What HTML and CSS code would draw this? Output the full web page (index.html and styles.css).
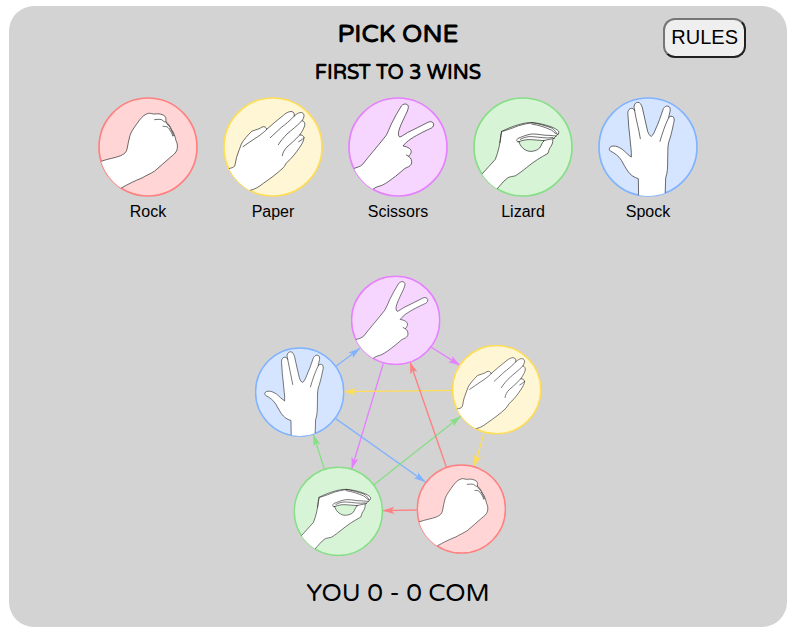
FILE: index.html
```html
<!DOCTYPE html>
<html lang="en">
<head>
<meta charset="utf-8">
<title>Rock Paper Scissors Lizard Spock</title>
<link rel="stylesheet" href="styles.css">
</head>
<body>
<svg class="sprite" aria-hidden="true">
  <defs>
    <clipPath id="disc"><circle cx="174" cy="171" r="147"/></clipPath>
    <symbol id="rock" viewBox="24 21 300 300">
      <circle cx="174" cy="171" r="147" fill="#ffd5d5" stroke="#ff8080" stroke-width="5"/>
      <g clip-path="url(#disc)" class="hand">
        <path d="M20 219L33 214C55 206 75 204 92 197C103 192 108 188 111 178C114 163 116 150 120 136C125 121 137 107 148 91C157 79 166 72 176 70C184 69 187 73 195 72C207 70 219 73 225 79C229 83 227 89 228 95C235 102 241 108 244 118C252 128 255 139 258 152C263 161 263 170 261 179C258 189 250 195 241 202C224 217 209 230 194 243C180 252 167 257 156 264C134 272 112 284 92 295L60 330L10 270Z"/>
        <path d="M194 89C205 88 215 86 220 93C224 97 228 96 228 95M219 109C227 109 234 109 238 118C243 125 247 131 248 138M229 98C232 104 235 107 239 110M240 114C245 121 249 129 251 137" fill="none"/>
      </g>
    </symbol>
    <symbol id="paper" viewBox="24 21 300 300">
      <circle cx="174" cy="171" r="147" fill="#fff6d5" stroke="#ffdd55" stroke-width="5"/>
      <g clip-path="url(#disc)" class="hand">
        <path d="M20 243L42 236C49 233 55 234 59 228C63 216 63 204 67 195C72 184 74 173 79 162C86 149 99 135 110 124C121 119 133 118 141 111C149 108 154 112 155 118C171 104 188 89 205 76C215 67 227 62 234 66C238 69 239 74 237 79C246 70 256 65 263 69C269 73 268 82 261 92C267 93 271 99 269 107C266 117 261 125 254 135C260 134 266 137 267 143C267 152 260 163 254 172C242 190 228 207 215 218C211 222 210 228 205 233C186 251 164 267 145 280C131 291 120 298 105 301L75 330L10 270Z"/>
        <path d="M84 170C96 162 107 154 119 146C129 140 140 132 148 125C152 122 154 120 155 118M237 79C224 93 211 103 198 113C186 125 174 135 166 143M261 92C247 107 231 119 216 132C206 143 197 152 190 164M254 135C242 149 228 160 216 171C208 179 203 188 202 197M267 143L261 149L251 155" fill="none"/>
      </g>
    </symbol>
    <symbol id="scissors" viewBox="24 21 300 300">
      <circle cx="174" cy="171" r="147" fill="#f6d5ff" stroke="#e580ff" stroke-width="5"/>
      <g clip-path="url(#disc)" class="hand">
        <path d="M20 242L40 236C50 232 60 231 68 223C78 211 87 198 97 187C110 171 125 154 138 137C144 127 148 115 154 102C163 84 173 65 184 48C189 42 197 40 202 44C207 48 205 55 202 63C194 82 184 99 178 117C175 126 173 137 179 141C184 141 193 133 202 128C223 118 244 107 264 97C271 93 279 95 281 102C282 110 276 114 268 117C242 129 215 143 199 157C195 161 192 165 189 168C196 169 207 172 212 179C216 186 212 192 206 199C213 203 217 213 214 222C210 230 203 231 195 235C184 244 171 256 157 266C142 277 129 286 120 288C111 290 105 293 97 299L73 330L10 270Z"/>
        <path d="M206 199L199 195" fill="none"/>
      </g>
    </symbol>
    <symbol id="lizard" viewBox="24 21 300 300">
      <circle cx="174" cy="171" r="147" fill="#d7f4d7" stroke="#87de87" stroke-width="5"/>
      <g clip-path="url(#disc)" class="hand">
        <path d="M20 280L52 251C65 236 79 222 91 208C96 197 99 184 102 172C106 155 106 138 110 124C127 116 143 109 161 104C175 100 188 97 202 98C222 99 243 105 260 111C269 114 276 119 281 124C283 131 279 134 273 138L263 149C264 156 262 162 258 169C253 174 252 181 249 190C238 197 227 202 217 209C196 222 174 243 152 257C143 260 137 259 129 263C117 271 107 285 96 297L62 330Z"/>
        <path d="M162 155C173 150 187 148 200 149C213 150 225 151 238 152C230 158 230 166 224 174C216 182 203 185 193 184C177 181 165 169 162 155Z" class="gap"/>
        <path d="M162 155C153 158 154 149 159 145C172 140 185 134 200 132C218 131 236 137 252 136C260 136 267 138 273 138M166 148C179 141 190 139 202 140C222 141 241 146 264 143M202 98C220 101 240 107 258 113C266 117 271 123 275 130M200 102C221 105 243 113 259 120C267 124 267 131 278 133M235 152L268 145M113 124C130 119 146 113 161 107C175 103 188 100 202 98M110 124L105 158" fill="none"/>
      </g>
    </symbol>
    <symbol id="spock" viewBox="24 21 300 300">
      <circle cx="174" cy="171" r="147" fill="#d5e5ff" stroke="#80b3ff" stroke-width="5"/>
      <g clip-path="url(#disc)" class="hand">
        <path d="M146 330L145 266C132 262 121 255 113 243C106 234 101 222 95 212C86 198 74 189 61 183C56 179 57 171 65 169C76 166 86 171 97 178C107 186 114 195 124 201C125 183 121 163 120 145C117 122 115 99 114 77C112 64 116 55 125 55C130 55 132 58 134 62C130 49 133 38 143 37C151 37 154 44 157 53C162 76 167 99 173 124C176 132 179 138 184 139C191 134 193 126 197 117C206 98 212 79 219 59C223 49 230 46 237 50C242 54 241 61 239 69C237 74 237 79 236 83C239 78 247 77 251 82C254 88 252 96 250 104C246 123 242 141 236 157C232 175 234 193 233 210C233 230 233 247 227 264L225 330Z"/>
        <path d="M134 62C138 90 147 118 151 146M236 83C225 106 217 129 210 154" fill="none"/>
      </g>
    </symbol>
    <marker id="tip-blue" viewBox="-36 -12 36 24" refX="0" refY="0" markerWidth="36" markerHeight="24" markerUnits="userSpaceOnUse" orient="auto"><path d="M0 0L-35 -11L-27 0L-35 11Z" fill="#80b3ff"/></marker>
    <marker id="tip-purple" viewBox="-36 -12 36 24" refX="0" refY="0" markerWidth="36" markerHeight="24" markerUnits="userSpaceOnUse" orient="auto"><path d="M0 0L-35 -11L-27 0L-35 11Z" fill="#e580ff"/></marker>
    <marker id="tip-yellow" viewBox="-36 -12 36 24" refX="0" refY="0" markerWidth="36" markerHeight="24" markerUnits="userSpaceOnUse" orient="auto"><path d="M0 0L-35 -11L-27 0L-35 11Z" fill="#ffdd55"/></marker>
    <marker id="tip-green" viewBox="-36 -12 36 24" refX="0" refY="0" markerWidth="36" markerHeight="24" markerUnits="userSpaceOnUse" orient="auto"><path d="M0 0L-35 -11L-27 0L-35 11Z" fill="#87de87"/></marker>
    <marker id="tip-red" viewBox="-36 -12 36 24" refX="0" refY="0" markerWidth="36" markerHeight="24" markerUnits="userSpaceOnUse" orient="auto"><path d="M0 0L-35 -11L-27 0L-35 11Z" fill="#ff8080"/></marker>
  </defs>
</svg>
<main class="game">
  <header class="top">
    <div class="titles">
      <h1 class="title">PICK ONE</h1>
      <h2 class="subtitle">FIRST TO 3 WINS</h2>
    </div>
    <button class="rules" type="button">RULES</button>
  </header>
  <div class="choices">
    <button class="choice" type="button"><svg class="choice-icon" aria-hidden="true"><use href="#rock"/></svg>Rock</button>
    <button class="choice" type="button"><svg class="choice-icon" aria-hidden="true"><use href="#paper"/></svg>Paper</button>
    <button class="choice" type="button"><svg class="choice-icon" aria-hidden="true"><use href="#scissors"/></svg>Scissors</button>
    <button class="choice" type="button"><svg class="choice-icon" aria-hidden="true"><use href="#lizard"/></svg>Lizard</button>
    <button class="choice" type="button"><svg class="choice-icon" aria-hidden="true"><use href="#spock"/></svg>Spock</button>
  </div>
  <svg class="diagram" viewBox="9 0 930 900" aria-hidden="true">
    <g class="arrows">
      <path d="M288 304L360 250" stroke="#80b3ff" marker-end="url(#tip-blue)"/>
      <path d="M286 460L556 651" stroke="#80b3ff" marker-end="url(#tip-blue)"/>
      <path d="M573 246L660 301" stroke="#e580ff" marker-end="url(#tip-purple)"/>
      <path d="M430 295L335 612" stroke="#e580ff" marker-end="url(#tip-purple)"/>
      <path d="M637 376L312 380" stroke="#ffdd55" marker-end="url(#tip-yellow)"/>
      <path d="M732 505L703 605" stroke="#ffdd55" marker-end="url(#tip-yellow)"/>
      <path d="M402 659L662 454" stroke="#87de87" marker-end="url(#tip-green)"/>
      <path d="M253 612L220 508" stroke="#87de87" marker-end="url(#tip-green)"/>
      <path d="M619 606L510 291" stroke="#ff8080" marker-end="url(#tip-red)"/>
      <path d="M530 735L428 737" stroke="#ff8080" marker-end="url(#tip-red)"/>
    </g>
    <use href="#scissors" x="332" y="31" width="270" height="270"/>
    <use href="#paper" x="635" y="239" width="270" height="270"/>
    <use href="#rock" x="529" y="597" width="270" height="270"/>
    <use href="#lizard" x="160" y="604" width="270" height="270"/>
    <use href="#spock" x="44" y="246" width="270" height="270"/>
  </svg>
  <p class="score">YOU 0 - 0 COM</p>
</main>
</body>
</html>
```

FILE: styles.css
```css
* {
  box-sizing: border-box;
}

body {
  margin: 0;
  background: #fff;
  color: #000;
}

.sprite {
  position: absolute;
  width: 0;
  height: 0;
}

.hand {
  fill: #fff;
  stroke: #222;
  stroke-width: 2;
  stroke-linejoin: round;
  stroke-linecap: round;
}

.gap {
  fill: #d7f4d7;
}

.game {
  display: flex;
  flex-direction: column;
  align-items: center;
  min-height: calc(100vh - 12px);
  margin: 6px 8px 6px 9px;
  padding: 12px 0;
  border-radius: 25px;
  background: #d3d3d3;
}

.top {
  display: grid;
  grid-template-columns: 1fr auto 1fr;
  align-items: start;
  width: 100%;
  padding: 0 41px;
}

.titles {
  grid-column: 2;
  text-align: center;
  font-family: "Varela Round", Lato, sans-serif;
}

.title {
  margin: 0;
  font-size: 25px;
  line-height: 32px;
  font-weight: 700;
}

.subtitle {
  margin: 11px 0 0;
  font-size: 20px;
  line-height: 24px;
  font-weight: 700;
}

.rules {
  justify-self: end;
  height: 40px;
  padding: 0 6px 2px;
  border: 2px outset #767676;
  border-radius: 12px;
  background: #efefef;
  color: #000;
  font: 20px "Liberation Sans", sans-serif;
}

.choices {
  display: flex;
  justify-content: center;
  gap: 25px;
  margin-top: 12px;
}

.choice {
  display: flex;
  flex-direction: column;
  align-items: center;
  gap: 5px;
  width: 100px;
  padding: 0;
  border: 0;
  background: none;
  color: #000;
  font: 16px/20px "Liberation Sans", sans-serif;
}

.choice-icon {
  width: 100px;
  height: 100px;
}

.diagram {
  width: 310px;
  height: 300px;
  margin-top: 43px;
}

.arrows {
  fill: none;
  stroke-width: 4;
}

.score {
  margin: 12px 0 0;
  font: 25px/32px "Varela Round", Lato, sans-serif;
}
```
